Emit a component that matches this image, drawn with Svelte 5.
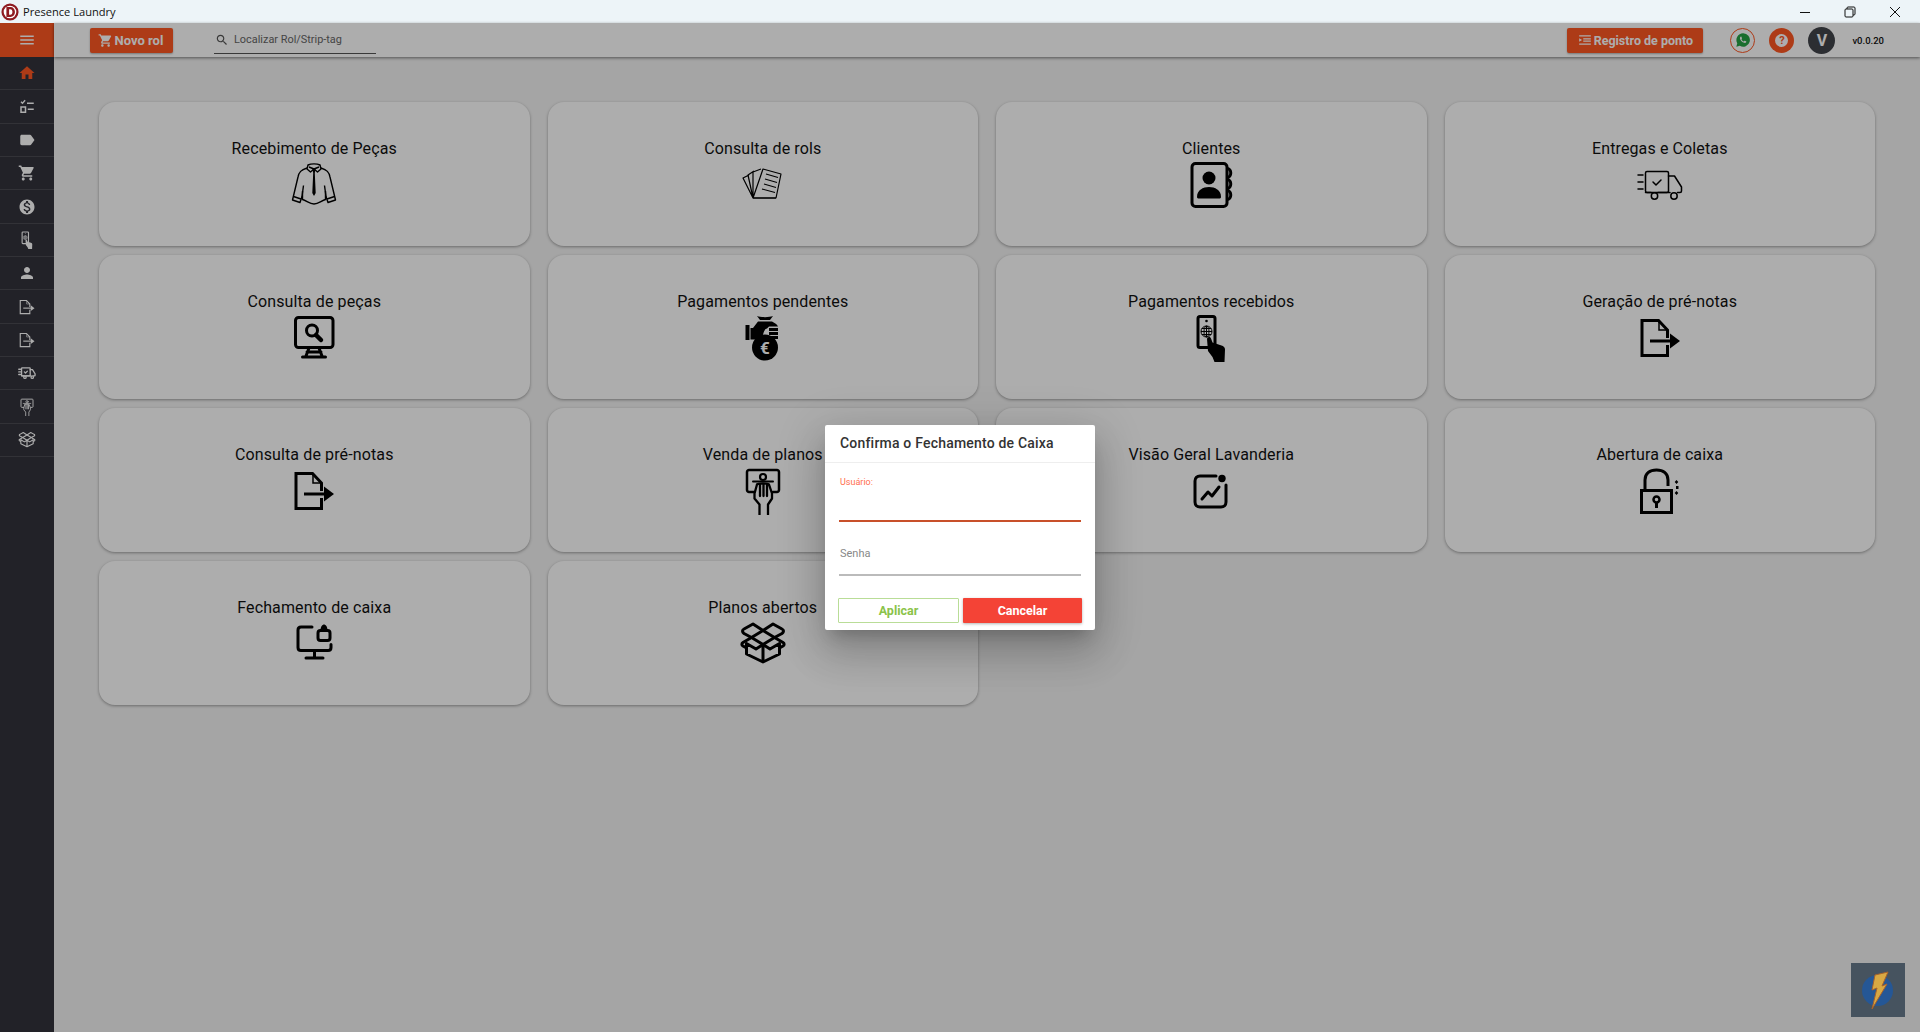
<script>
  const P = {
    menu: 'M3 18h18v-2H3v2zm0-5h18v-2H3v2zm0-7v2h18V6H3z',
    home: 'M10 20v-6h4v6h5v-8h3L12 3 2 12h3v8z',
    label: 'M17.63 5.84C17.27 5.33 16.67 5 16 5L5 5.01C3.9 5.01 3 5.9 3 7v10c0 1.1.9 1.99 2 1.99L16 19c.67 0 1.27-.33 1.63-.84L22 12l-4.37-6.16z',
    cart: 'M7 18c-1.1 0-1.99.9-1.99 2S5.9 22 7 22s2-.9 2-2-.9-2-2-2zM1 2v2h2l3.6 7.59-1.35 2.45c-.16.28-.25.61-.25.96 0 1.1.9 2 2 2h12v-2H7.42c-.14 0-.25-.11-.25-.25l.03-.12.9-1.63h7.45c.75 0 1.41-.41 1.75-1.03l3.58-6.49c.08-.14.12-.31.12-.48 0-.55-.45-1-1-1H5.21l-.94-2H1zm16 16c-1.1 0-1.99.9-1.99 2s.89 2 1.99 2 2-.9 2-2-.9-2-2-2z',
    person: 'M12 12c2.21 0 4-1.79 4-4s-1.79-4-4-4-4 1.79-4 4 1.79 4 4 4zm0 2c-2.67 0-8 1.34-8 4v2h16v-2c0-2.66-5.33-4-8-4z',
    money: 'M12 2C6.48 2 2 6.48 2 12s4.48 10 10 10 10-4.48 10-10S17.52 2 12 2zm1.41 16.09V20h-2.67v-1.93c-1.71-.36-3.16-1.46-3.27-3.4h1.96c.1 1.05.82 1.87 2.65 1.87 1.96 0 2.4-.98 2.4-1.59 0-.83-.44-1.61-2.67-2.14-2.48-.6-4.18-1.62-4.18-3.67 0-1.72 1.39-2.84 3.11-3.21V4h2.67v1.95c1.86.45 2.79 1.86 2.85 3.39H14.3c-.05-1.11-.64-1.87-2.22-1.87-1.5 0-2.4.68-2.4 1.64 0 .84.65 1.39 2.67 1.91s4.18 1.39 4.18 3.91c-.01 1.83-1.38 2.83-3.12 3.16z',
    search: 'M15.5 14h-.79l-.28-.27C15.41 12.59 16 11.11 16 9.5 16 5.91 13.09 3 9.5 3S3 5.91 3 9.5 5.91 16 9.5 16c1.61 0 3.09-.59 4.23-1.57l.27.28v.79l5 4.99L20.49 19l-4.99-5zm-6 0C7.01 14 5 11.99 5 9.5S7.01 5 9.5 5 14 7.01 14 9.5 11.99 14 9.5 14z'
  };

  const I = {
    shirt: `<g fill="none" stroke="currentColor" stroke-width="1.400" stroke-linejoin="round"><path d="M17 7C11 9 9 11 8 16L2.500 39l7.500 2.500 2-6 1.500-11M31 7c6 2 8 4 9 9l5.500 23-7.500 2.500-2-6-1.500-11"/><path d="M3.500 35.500l7.500 2.500M44.500 35.500l-7.500 2.500"/><path d="M12.500 30v8.500c4 1 7 4.500 11.500 4.500s7.500-3.500 11.500-4.500V30"/><path d="M18 4c3-1.500 9-1.500 12 0l1 4-3.500 3-3.500-3-3.500 3-3.500-3z"/><path d="M19 6l5 2 5-2"/></g><path d="M22.500 8h3l-.7 4 .9 20-1.700 3-1.700-3 .9-20z" fill="currentColor"/>`,
    rolls: `<g fill="none" stroke="currentColor" stroke-width="1.200" stroke-linejoin="round"><path d="M14 37L4 17l6-3M14 37L9 14l6-4M14 37L14 11l8-3M14 37L24 8l18 5-5 24z"/><path d="M14 37h23"/><path d="M27 13l12 3.500M26 18l12 3.500M25 23l12 3.500M23 28l13 3.500"/></g>`,
    contact: `<rect x="5" y="2.500" width="35" height="43" rx="3.500" fill="none" stroke="currentColor" stroke-width="3"/><path d="M40 7.500c5 0 5 9 0 9M40 18.500c5 0 5 9 0 9M40 29.500c5 0 5 9 0 9" fill="none" stroke="currentColor" stroke-width="3"/><circle cx="22" cy="17" r="6.500" fill="currentColor"/><path d="M10 36c0-7 6-10 12-10s12 3 12 10c0 1-1 1.500-2 1.500H12c-1 0-2-.500-2-1.500z" fill="currentColor"/>`,
    truck: `<g fill="none" stroke="currentColor" stroke-width="1.500" stroke-linejoin="round" stroke-linecap="round"><rect x="9.500" y="10.500" width="23" height="21" rx="1.500"/><path d="M32.500 15h6l7 11v4c0 1-.500 1.500-1.500 1.500h-2.500M34 31.500h-.500M9.500 31.500h5.500M22 31.500h12"/><circle cx="18.500" cy="35" r="3.200"/><circle cx="38" cy="35" r="3.200"/><path d="M2 14h5M2 21h5M2 28h5M17 21l3 3 5-5"/></g>`,
    monitor: `<g fill="none" stroke="currentColor" stroke-width="3" stroke-linecap="round"><rect x="5.500" y="3.500" width="37.500" height="30" rx="3"/><path d="M19 34l-3 8M29 34l3 8M12.500 43h23M17 38h14"/></g><circle cx="22" cy="16.500" r="5.500" fill="none" stroke="currentColor" stroke-width="3"/><path d="M26 21l5 5" stroke="currentColor" stroke-width="4.500" stroke-linecap="round"/>`,
    bag: `<g fill="currentColor"><rect x="6.500" y="11" width="4" height="15"/><path d="M18 2c4 1.500 12 1.500 16 0l-3 4H21zM19 7.500h14c3 1.500 5 3 6 5H30l-2 2c-2 0-3 3-4 6l-1 3-6 2H11.500V14H14z"/><rect x="30" y="14" width="9" height="3"/><rect x="30" y="18" width="9" height="3"/><rect x="30" y="22" width="9" height="3"/><circle cx="26" cy="33.500" r="13"/></g><text x="26" y="39.500" text-anchor="middle" font-family="Roboto" font-weight="700" font-size="17" fill="#fff">€</text>`,
    phone: `<rect x="11" y="2.500" width="17" height="31" rx="2" fill="none" stroke="currentColor" stroke-width="3"/><circle cx="19.500" cy="7" r="1.300" fill="currentColor"/><g fill="none" stroke="currentColor" stroke-width="1"><circle cx="19.500" cy="17.500" r="5.500"/><path d="M14 17.500h11M14.800 14.500h9.400M14.800 20.500h9.400M19.500 12v11"/><ellipse cx="19.500" cy="17.500" rx="2.500" ry="5.500"/></g><path d="M20 25c0-2 3-3 4-.500l1.500 4 9 3c2 .500 3.500 2 3.500 4l-.500 12.500H27.500l-2-5L21 37z" fill="currentColor"/>`,
    file: `<path d="M31.500 24V16l-9-9.500H6V41.500H31.500V31" fill="none" stroke="currentColor" stroke-width="3"/><path d="M23 7v9h8.500" fill="none" stroke="currentColor" stroke-width="1.500"/><path d="M14 27h21" stroke="currentColor" stroke-width="3"/><path d="M34 19.500L44 27l-10 7.500z" fill="currentColor"/>`,
    plan: `<g fill="none" stroke="currentColor" stroke-linecap="round" stroke-linejoin="round"><path d="M15 25h-5c-1 0-2-1-2-2V5c0-1 1-2 2-2h28c1 0 2 1 2 2v18c0 1-1 2-2 2h-4" stroke-width="2.500"/><circle cx="24" cy="10" r="3" stroke-width="2.200"/><path d="M14 14.500h20" stroke-width="2"/><path d="M18 17.500c1-1.500 11-1.500 12 0l3 9v5l-4 6v10M18 17.500l-2.500 9v5l5 6v10M21 18v11M24.500 18v11M28 18v11" stroke-width="2.300"/></g>`,
    chart: `<g fill="none" stroke="currentColor" stroke-width="3" stroke-linecap="round" stroke-linejoin="round" transform="translate(0 -1)"><path d="M29 10H13c-3 0-5 2-5 5v21c0 3 2 5 5 5h21c3 0 5-2 5-5V19"/><path d="M15 33l6-7 4 4 7-9"/></g><circle cx="35" cy="11.500" r="3.700" fill="currentColor"/>`,
    lock: `<g fill="none" stroke="currentColor" stroke-width="3"><path d="M9 23V13C9 6 14 3 20.500 3S32 6 32 13v6"/><rect x="5.500" y="23.500" width="30" height="22"/></g><circle cx="20.500" cy="32.500" r="3" fill="none" stroke="currentColor" stroke-width="2.500"/><path d="M20.500 35v6" stroke="currentColor" stroke-width="3"/><path d="M40.500 13l1.800 2-1.800 2-1.800-2zM42.500 19v3h-2.500v-3zM40.500 24l1.800 2-1.800 2-1.800-2z" fill="currentColor"/>`,
    desklock: `<g fill="none" stroke="currentColor" stroke-width="3" stroke-linecap="round" stroke-linejoin="round" transform="translate(0 -1.500)"><path d="M22 8.500H11c-2 0-3 1-3 3V29c0 2 1 3 3 3h27c2 0 3-1 3-3v-3"/><path d="M24.500 32v7M16 39.500h17"/><rect x="28" y="12" width="12" height="10" rx="2.500"/></g><path d="M30.500 10.500c0-4 2-6 3.500-6s3.500 2 3.500 6z" fill="currentColor"/>`,
    box: `<g fill="none" stroke="currentColor" stroke-width="3" stroke-linejoin="round" transform="translate(0 -1)"><path d="M24 11.500L35.500 18.500 24 25.500 12.500 18.500z"/><path d="M24 11.500L14 5 5 10c-2 1-2 3 0 4.500l7.500 4-8.500 5c-1.500 1-1.500 2.500 0 3.500l3.500 2"/><path d="M24 11.500L34 5l9 5c2 1 2 3 0 4.500l-7.500 4 8.500 5c1.500 1 1.500 2.500 0 3.500l-3.500 2"/><path d="M24 25.500l-7 4.500-9.500-5.500V35L24 43l16.500-8V24.500L31 30l-7-4.500V43"/></g>`
  };

  const cards = [
    ['Recebimento de Peças', 'shirt'], ['Consulta de rols', 'rolls'], ['Clientes', 'contact'], ['Entregas e Coletas', 'truck'],
    ['Consulta de peças', 'monitor'], ['Pagamentos pendentes', 'bag'], ['Pagamentos recebidos', 'phone'], ['Geração de pré-notas', 'file'],
    ['Consulta de pré-notas', 'file'], ['Venda de planos', 'plan'], ['Visão Geral Lavanderia', 'chart'], ['Abertura de caixa', 'lock'],
    ['Fechamento de caixa', 'desklock'], ['Planos abertos', 'box']
  ];

  const side = ['home', 'check', 'label', 'cart', 'money', 'phone', 'person', 'file', 'file', 'truck', 'plan', 'box'];
</script>

<div class="window">
  <header class="titlebar">
    <svg class="logo" viewBox="0 0 20 20" width="18" height="18">
      <circle cx="10" cy="10" r="9.500" fill="#8e1a20"/>
      <circle cx="10" cy="10" r="7" fill="#fff"/>
      <path d="M6 4.500h4.500c3 0 5 2.300 5 5.500s-2 5.500-5 5.500H6zM9 7v6h1.500c1.400 0 2.200-1.300 2.200-3S11.900 7 10.500 7z" fill="#8e1a20"/>
    </svg>
    <span class="apptitle">Presence Laundry</span>
    <div class="winctrls">
      <svg width="12" height="12" viewBox="0 0 12 12"><path d="M1 6.500h10" stroke="#111" stroke-width="1"/></svg>
      <svg width="12" height="12" viewBox="0 0 12 12"><path d="M3 3V2c0-.6.400-1 1-1h6c.6 0 1 .400 1 1v6c0 .6-.400 1-1 1H9" fill="none" stroke="#111"/><rect x="1" y="3" width="8" height="8" rx="1" fill="none" stroke="#111"/></svg>
      <svg width="12" height="12" viewBox="0 0 12 12"><path d="M1 1l10 10M11 1L1 11" stroke="#111" stroke-width="1"/></svg>
    </div>
  </header>

  <div class="stage">
    <nav class="sidebar">
      <div class="burger"><svg viewBox="0 0 24 24" width="18" height="18"><path d={P.menu} fill="#fff"/></svg></div>
      {#each side as s, i}
        <div class="sideitem" class:active={i === 0} class:thick={s === 'truck'}>
          {#if P[s]}
            <svg viewBox="0 0 24 24" width="18" height="18"><path d={P[s]} fill="currentColor"/></svg>
          {:else if s === 'check'}
            <svg viewBox="0 0 24 24" width="18" height="18"><path d="M4 5l2 2 3.500-4" fill="none" stroke="currentColor" stroke-width="1.800"/><rect x="4" y="12" width="6" height="7" fill="none" stroke="currentColor" stroke-width="2"/><path d="M12 7h9M13 15h8" stroke="currentColor" stroke-width="2.200"/></svg>
          {:else}
            <svg viewBox="0 0 48 48" width="18" height="18">{@html I[s]}</svg>
          {/if}
        </div>
      {/each}
    </nav>

    <div class="main">
      <div class="toolbar">
        <button class="orange novo">
          <svg viewBox="0 0 24 24" width="15" height="15"><path d={P.cart} fill="currentColor"/></svg>
          Novo rol
        </button>
        <div class="search">
          <svg viewBox="0 0 24 24" width="14" height="14"><path d={P.search} fill="#555"/></svg>
          <span>Localizar Rol/Strip-tag</span>
        </div>
        <div class="spacer"></div>
        <button class="orange ponto">
          <svg viewBox="0 0 24 24" width="14" height="14"><path d="M2 4h20v2H2zM9 9h13v2H9zM9 13h13v2H9zM2 18h20v2H2zM2 9l5 3-5 3z" fill="currentColor"/></svg>
          Registro de ponto
        </button>
        <div class="round wa">
          <svg viewBox="0 0 24 24" width="16" height="16"><path d="M12 2a10 10 0 0 0-8.600 15L2 22l5.200-1.400A10 10 0 1 0 12 2z" fill="#25a244"/><path d="M8.500 7c-.8.600-1.300 1.600-1 3 .6 2.600 3.500 5.600 6.300 6.300 1.300.300 2.400-.200 3-1 .300-.5.300-1 .100-1.200l-2-1c-.3-.1-.5 0-.7.200l-.8 1c-1.700-.6-3-2-3.700-3.600l.7-.8c.2-.2.200-.4.100-.7l-.9-2c-.2-.3-.6-.4-1.100-.2z" fill="#fff"/></svg>
        </div>
        <div class="round help"><span>?</span></div>
        <div class="round avatar">V</div>
        <span class="version">v0.0.20</span>
      </div>

      <div class="content">
        {#each cards as c}
          <button class="card">
            <span class="cardtitle">{c[0]}</span>
            <svg class="cardicon" viewBox="0 0 48 48" width="48" height="48">{@html I[c[1]]}</svg>
          </button>
        {/each}
      </div>
    </div>

    <div class="backdrop"></div>

    <div class="dialog">
      <div class="dlghead">Confirma o Fechamento de Caixa</div>
      <div class="field first">
        <label for="u">Usuário:</label>
        <input id="u" type="text" />
      </div>
      <div class="field second">
        <label for="s">Senha</label>
        <input id="s" type="password" />
      </div>
      <div class="actions">
        <button class="apply">Aplicar</button>
        <button class="cancel">Cancelar</button>
      </div>
    </div>

    <div class="bolt">
      <svg viewBox="0 0 54 54" width="54" height="54">
        <circle cx="26.500" cy="27.500" r="15.500" fill="#255796"/>
        <path d="M37 9L24 12 21 27l5-2-5 21 15-25-5 2z" fill="#d8a843" stroke="#a8622a" stroke-width="1"/>
      </svg>
    </div>
  </div>
</div>

<style>
  :global(body) { margin: 0; font-family: Roboto, sans-serif; overflow: hidden; }
  .window { width: 1920px; height: 1032px; display: flex; flex-direction: column; overflow: hidden; }

  .titlebar { height: 23px; background: #edf4f8; display: flex; align-items: center; padding-left: 1px; flex: none; }
  .logo { flex: none; }
  .apptitle { font-family: "Open Sans", sans-serif; font-size: 11.100px; color: #111; margin-left: 4px; }
  .winctrls { margin-left: auto; display: flex; gap: 33px; padding-right: 19px; }

  .stage { position: relative; flex: 1; display: flex; min-height: 0; }

  .sidebar { width: 54px; flex: none; background: #33333c; color: #fff; }
  .burger { height: 34px; background: #ff5722; display: flex; align-items: center; justify-content: center; }
  .sideitem { height: 33.350px; box-sizing: border-box; border-bottom: 1px solid #4a4a52; display: flex; align-items: center; justify-content: center; }
  .sideitem.active { color: #ff5722; }
  .sideitem.thick :global(g) { stroke-width: 3.500px; }

  .main { flex: 1; display: flex; flex-direction: column; min-width: 0; background: #f3f3f3; }

  .toolbar { height: 34px; flex: none; background: #fff; box-sizing: border-box; display: flex; align-items: center; padding: 0 36px; box-shadow: 0 1px 3px rgba(0,0,0,.5); position: relative; }
  .orange { background: #ff5722; color: #fff; border: 0; border-radius: 2px; height: 25px; display: flex; align-items: center; justify-content: center; gap: 3px; font: 700 12px Roboto, sans-serif; padding: 0; box-shadow: 0 1px 2px rgba(0,0,0,.3); }
  .novo { width: 83px; font-size: 13px; gap: 2px; padding-right: 2px; box-sizing: border-box; }
  .search { width: 162px; height: 31px; margin-left: 41px; box-sizing: border-box; border-bottom: 1px solid #555; display: flex; align-items: center; gap: 5px; padding: 3px 0 0 1px; font-size: 10.900px; color: #666; align-self: flex-start; }
  .spacer { flex: 1; }
  .ponto { width: 136px; font-size: 12.500px; gap: 2px; }
  .round { border-radius: 50%; display: flex; align-items: center; justify-content: center; box-sizing: border-box; flex: none; }
  .wa { width: 25px; height: 25px; margin-left: 27px; border: 1px solid #ff5722; background: #fff; }
  .help { width: 25px; height: 25px; margin-left: 14px; background: #ff5722; }
  .help span { width: 13px; height: 13px; background: #fff; border-radius: 50%; color: #ff5722; font-size: 11px; font-weight: 700; line-height: 13px; text-align: center; }
  .avatar { width: 27px; height: 27px; margin-left: 14px; background: #42444a; color: #fff; font-size: 16px; font-weight: 700; }
  .version { margin-left: 17px; font-size: 9.500px; font-weight: 500; color: #111; }

  .content { flex: 1; display: grid; grid-template-columns: repeat(4, 1fr); grid-auto-rows: 144px; gap: 9px 18px; padding: 45px 45px 0; align-content: start; }
  .card { border: 0; background: #fff; border-radius: 16px; box-shadow: 0 1px 3px rgba(0,0,0,.35); display: flex; flex-direction: column; align-items: center; padding: 37px 0 0; color: #000; font-family: Roboto, sans-serif; }
  .cardtitle { font-size: 16px; line-height: 20px; letter-spacing: .12px; color: #111; }
  .cardicon { margin-top: 2px; flex: none; }

  .backdrop { position: absolute; inset: 0; background: rgba(0,0,0,.32); }

  .dialog { position: absolute; left: 825px; top: 402px; width: 270px; height: 205px; background: #fff; border-radius: 2px; box-shadow: 0 11px 15px -7px rgba(0,0,0,.2), 0 24px 38px 3px rgba(0,0,0,.14), 0 9px 46px 8px rgba(0,0,0,.12); display: flex; flex-direction: column; }
  .dlghead { height: 38px; box-sizing: border-box; border-bottom: 1px solid #eee; padding: 0 15px; font-size: 14px; font-weight: 500; letter-spacing: .2px; line-height: 36px; color: #333; }
  .field { margin: 0 14px; display: flex; flex-direction: column; }
  .field label { font-size: 11px; line-height: 12px; color: #888; padding-left: 1px; }
  .field input { border: 0; border-bottom: 1px solid #bbb; outline: 0; padding: 0; background: transparent; width: 100%; }
  .first { margin-top: 13px; }
  .first label { font-size: 9px; color: #ff6e4e; }
  .first input { height: 34px; border-bottom: 2px solid #c8502a; box-sizing: border-box; }
  .second { margin-top: 26px; }
  .second input { height: 16px; border-bottom-width: 2px; box-sizing: border-box; }
  .actions { display: flex; gap: 4px; padding: 0 13px; margin-top: 22px; }
  .actions button { height: 25px; flex: 1; border-radius: 1px; font: 700 12.500px Roboto, sans-serif; padding: 0 0 1px; }
  .apply { background: #fff; color: #8bc34a; border: 1px solid #b9dd97; }
  .cancel { background: #f44336; color: #fff; border: 0; box-shadow: 0 1px 3px rgba(0,0,0,.3); }

  .bolt { position: absolute; left: 1851px; top: 940px; width: 54px; height: 54px; background: #46535f; }
  .bolt svg { display: block; }
</style>
